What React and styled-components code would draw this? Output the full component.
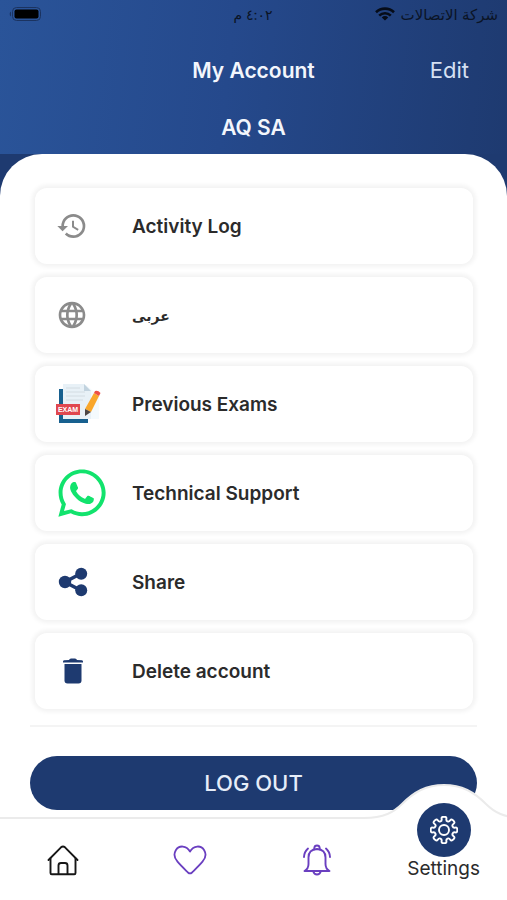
import styled, { createGlobalStyle } from 'styled-components';
import { MdHistory, MdLanguage } from 'react-icons/md';
import { FaWhatsapp } from 'react-icons/fa';

const NAVY = '#1e3a70';
const PURPLE = '#6a3fc0';

const GlobalStyle = createGlobalStyle`
  * {
    box-sizing: border-box;
  }

  body {
    margin: 0;
    background: #fff;
    font-family: Inter, 'DejaVu Sans', sans-serif;
    color: #2b2b2b;
  }

  button {
    font: inherit;
    border: 0;
    cursor: pointer;
  }
`;

const Screen = styled.div`
  min-height: 100vh;
  display: flex;
  flex-direction: column;
  background: ${NAVY};
`;

const Header = styled.header`
  padding-bottom: 10px;
  background-image: linear-gradient(96deg, #2a5499 0%, #25498c 45%, #1e3a70 100%);
  color: #f3f6fc;
`;

const StatusBar = styled.div`
  height: 28px;
  padding: 0 9px 0 8px;
  display: grid;
  grid-template-columns: 1fr auto 1fr;
  align-items: center;
  color: #0b1426;
  font-size: 14px;
`;

const Carrier = styled.div`
  display: flex;
  justify-content: flex-end;
  align-items: center;
  gap: 6px;
  font-size: 15px;
`;

const TitleBar = styled.div`
  height: 84px;
  padding: 0 38px;
  display: grid;
  grid-template-columns: 1fr auto 1fr;
  align-items: center;
`;

const Title = styled.h1`
  grid-column: 2;
  margin: 0;
  font-size: 21px;
  font-weight: 600;
`;

const EditButton = styled.button`
  justify-self: end;
  padding: 0;
  background: none;
  color: #d5e0f3;
  font-size: 22px;
`;

const UserName = styled.p`
  margin: 0;
  line-height: 32px;
  font-size: 21px;
  font-weight: 600;
  text-align: center;
`;

const Sheet = styled.main`
  flex: 1;
  padding: 34px 30px 7px;
  border-radius: 42px 42px 0 0;
  background: #fff;
`;

const Menu = styled.ul`
  margin: 0;
  padding: 0 4px 16px 5px;
  display: grid;
  gap: 13px;
  list-style: none;
  border-bottom: 2px solid #f4f4f4;
`;

const MenuButton = styled.button`
  width: 100%;
  height: 76px;
  padding: 0 20px;
  display: flex;
  align-items: center;
  gap: 26px;
  border-radius: 12px;
  background: #fff;
  box-shadow: 0 0 4px 3px #f3f3f3;
  color: #2b2b2b;
  font-size: 19px;
  font-weight: 600;
  text-align: left;
`;

const IconBox = styled.span`
  width: 51px;
  padding-left: ${(props) => props.$inset}px;
  display: flex;
  color: ${(props) => props.$color};
`;

const ArabicLabel = styled.span`
  font-size: 14px;
  font-weight: 700;
`;

const LogoutButton = styled.button`
  width: 100%;
  height: 54px;
  margin-top: 29px;
  display: block;
  border-radius: 27px;
  background: ${NAVY};
  color: #e6edf9;
  font-size: 22px;
  font-weight: 500;
`;

const TabBar = styled.nav`
  height: 83px;
  display: grid;
  grid-template-columns: repeat(4, 1fr);
  grid-auto-rows: 100%;
  border-top: 2px solid #ebebeb;
  background: #fff;
`;

const Tab = styled.a`
  position: relative;
  display: flex;
  flex-direction: column;
  justify-content: center;
  align-items: center;
  color: #2b2b2b;
  text-decoration: none;
`;

/* the raised hill behind the active tab, drawn over the page above */
const Hill = styled.svg`
  position: absolute;
  left: 50%;
  top: -35px;
  transform: translateX(-50%);
`;

const ActiveTab = styled(Tab)`
  justify-content: flex-end;
  padding-bottom: 19px;
  font-size: 19px;
  line-height: 24px;
`;

const Badge = styled.span`
  position: relative;
  flex: none;
  width: 54px;
  height: 54px;
  display: flex;
  justify-content: center;
  align-items: center;
  border-radius: 50%;
  background: ${NAVY};
  color: #fff;
`;

const TabLabel = styled.span`
  position: relative;
`;

const BatteryIcon = () => (
  <svg width="34" height="16" viewBox="0 0 34 16" aria-label="Battery">
    <rect x="4.5" y="1.5" width="28" height="13" rx="4" fill="none" stroke="#1b3360" />
    <rect x="6.5" y="3.5" width="24" height="9" rx="2" fill="#000" />
    <path d="M3 5.5a3 3 0 0 0 0 5z" fill="#1b3360" />
  </svg>
);

const WifiIcon = () => (
  <svg width="20" height="14" viewBox="0 0 20 14" fill="none" stroke="#060c18" strokeWidth="2.6">
    <path d="M1 5.2a13 13 0 0 1 18 0" />
    <path d="M4.2 8.6a8.4 8.4 0 0 1 11.6 0" />
    <path d="M10 13.6l-3.2-3.2a4.6 4.6 0 0 1 6.4 0z" fill="#060c18" stroke="none" />
  </svg>
);

const ExamIcon = () => (
  <svg width="46" height="42" viewBox="0 0 46 42">
    <path d="M8 2h22l13 11v23H8z" fill="#f4fafd" />
    <path d="M3 6h4v30h25v4H3z" fill="#17608f" />
    <path d="M7 1h21l7 7v28H7z" fill="#e8f1f7" />
    <path d="M28 1l7 7h-7z" fill="#c2d3df" />
    <path d="M10 5h14M10 9h19M10 13h19M10 17h17" stroke="#d3dce2" />
    <path d="M38 10l5 3-8 16-6-3z" fill="#f9a72b" />
    <path d="M38 10l1-2q3-1 5.5 2L43 13z" fill="#ee4f45" />
    <path d="M29 26l6 3-6 4z" fill="#4b4545" />
    <rect x="0" y="21" width="24" height="11" fill="#e04850" />
    <text
      x="12"
      y="29"
      fill="#fff"
      fontFamily="Liberation Sans, sans-serif"
      fontSize="7"
      fontWeight="700"
      textAnchor="middle"
    >
      EXAM
    </text>
  </svg>
);

const ShareIcon = () => (
  <svg width="30" height="30" viewBox="0 0 30 30" fill="currentColor">
    <path d="M23 6.5L7 15l16 8.5" fill="none" stroke="currentColor" strokeWidth="3.6" />
    <circle cx="7" cy="15" r="6.2" />
    <circle cx="23.2" cy="6.8" r="6" />
    <circle cx="23.2" cy="23.2" r="6" />
  </svg>
);

const TrashIcon = () => (
  <svg width="30" height="26" viewBox="0 0 30 26" fill="currentColor">
    <path d="M11 2q.5-1.5 2-1.5h4q1.5 0 2 1.5l5 .3q1 .2 1 1.2v1H5v-1q0-1 1-1.2z" />
    <path d="M6.5 6h17v16.5q0 3-3 3h-11q-3 0-3-3z" />
  </svg>
);

const HomeIcon = () => (
  <svg
    width="32"
    height="32"
    viewBox="0 0 32 32"
    fill="none"
    stroke="#161616"
    strokeWidth="1.9"
    strokeLinecap="round"
    strokeLinejoin="round"
  >
    <path d="M1.5 16L14 3.3q2-1.8 4 0L30.5 16" />
    <path d="M3.5 14.5V29q0 1.3 1.3 1.3h22.4q1.3 0 1.3-1.3V14.5" />
    <path d="M11.5 30V21.5q0-2.5 2.5-2.5h4q2.5 0 2.5 2.5V30" />
  </svg>
);

const HeartIcon = () => (
  <svg width="34" height="32" viewBox="0 0 34 32" fill="none" stroke={PURPLE} strokeWidth="1.8">
    <path
      d="M17 7.5C13.5 1.2 6 1 2.8 6.2c-2.3 4-.9 8.6 1.7 11.5 3 3.6 6.5 6.9 10.5 10.8q2 1.8 4 0c4-3.9 7.5-7.2 10.5-10.8 2.6-2.9 4-7.5 1.7-11.5C28 1 20.5 1.2 17 7.5z"
      strokeLinejoin="round"
    />
  </svg>
);

const BellIcon = () => (
  <svg
    width="30"
    height="32"
    viewBox="0 0 30 32"
    fill="none"
    stroke={PURPLE}
    strokeWidth="1.9"
    strokeLinecap="round"
    strokeLinejoin="round"
  >
    <path d="M12.3 5.3V4q.2-2.5 2.7-2.5T17.7 4v1.3" />
    <path d="M2.5 27q4-2.2 4-7v-6.5q0-8 8.5-8.5 8.5.5 8.5 8.5V20q0 4.8 4 7z" />
    <path d="M11.3 27.5q.8 3 3.7 3t3.7-3" />
    <path d="M6 4.5q-3.8 3.3-4 8.5M24 4.5q3.8 3.3 4 8.5" />
  </svg>
);

// each tooth has two outer and two inner corners, as [angle, radius]
const gearCorners = [...Array(8).keys()].flatMap((tooth) =>
  [[-12, 13.6], [12, 13.6], [12, 9.4], [33, 9.4]].map(([offset, radius]) => {
    const angle = ((tooth * 45 + offset) * Math.PI) / 180;
    return [14 + radius * Math.sin(angle), 14 - radius * Math.cos(angle)];
  })
);

// curve from midpoint to midpoint so that every corner is rounded
const gearPath = gearCorners
  .map(([x, y], i) => {
    const [nextX, nextY] = gearCorners[(i + 1) % gearCorners.length];
    const mid = `${(x + nextX) / 2} ${(y + nextY) / 2}`;
    return i === 0 ? `M${mid}` : `Q${x} ${y} ${mid}`;
  })
  .concat(
    `Q${gearCorners[0].join(' ')} ${(gearCorners[0][0] + gearCorners[1][0]) / 2} ${
      (gearCorners[0][1] + gearCorners[1][1]) / 2
    }Z`
  )
  .join('');

const GearIcon = () => (
  <svg
    width="28"
    height="28"
    viewBox="0 0 28 28"
    fill="none"
    stroke="currentColor"
    strokeWidth="1.9"
    strokeLinejoin="round"
  >
    <path d={gearPath} />
    <circle cx="14" cy="14" r="5" />
  </svg>
);

const items = [
  { label: 'Activity Log', icon: <MdHistory size={32} />, color: '#8b8b8b', inset: 1 },
  {
    label: 'عربى',
    icon: <MdLanguage size={32} />,
    color: '#8b8b8b',
    inset: 1,
    arabic: true,
  },
  { label: 'Previous Exams', icon: <ExamIcon />, inset: 1 },
  { label: 'Technical Support', icon: <FaWhatsapp size={54} />, color: '#12e36d', inset: 3 },
  { label: 'Share', icon: <ShareIcon />, color: NAVY, inset: 3 },
  { label: 'Delete account', icon: <TrashIcon />, color: NAVY, inset: 3 },
];

export default () => {
  return (
    <>
      <GlobalStyle />
      <Screen>
        <Header>
          <StatusBar>
            <BatteryIcon />
            <span dir="rtl">٤:٠٢ م</span>
            <Carrier>
              <WifiIcon />
              <span dir="rtl">شركة الاتصالات</span>
            </Carrier>
          </StatusBar>
          <TitleBar>
            <Title>My Account</Title>
            <EditButton>Edit</EditButton>
          </TitleBar>
          <UserName>AQ SA</UserName>
        </Header>
        <Sheet>
          <Menu>
            {items.map((item) => (
              <li key={item.label}>
                <MenuButton>
                  <IconBox $color={item.color} $inset={item.inset}>
                    {item.icon}
                  </IconBox>
                  {item.arabic ? <ArabicLabel lang="ar">{item.label}</ArabicLabel> : item.label}
                </MenuButton>
              </li>
            ))}
          </Menu>
          <LogoutButton>LOG OUT</LogoutButton>
        </Sheet>
        <TabBar>
          <Tab href="#home" aria-label="Home">
            <HomeIcon />
          </Tab>
          <Tab href="#favorites" aria-label="Favorites">
            <HeartIcon />
          </Tab>
          <Tab href="#notifications" aria-label="Notifications">
            <BellIcon />
          </Tab>
          <ActiveTab href="#settings">
            <Hill width="160" height="40" viewBox="0 0 160 40">
              <path
                d="M0 34C20 34 30 28 38 20C50 8 62 1 80 1s30 7 42 19c8 8 18 14 38 14v6H0z"
                fill="#fff"
              />
              <path
                d="M0 34C20 34 30 28 38 20C50 8 62 1 80 1s30 7 42 19c8 8 18 14 38 14"
                fill="none"
                stroke="#ebebeb"
                strokeWidth="2"
              />
            </Hill>
            <Badge>
              <GearIcon />
            </Badge>
            <TabLabel>Settings</TabLabel>
          </ActiveTab>
        </TabBar>
      </Screen>
    </>
  );
};
